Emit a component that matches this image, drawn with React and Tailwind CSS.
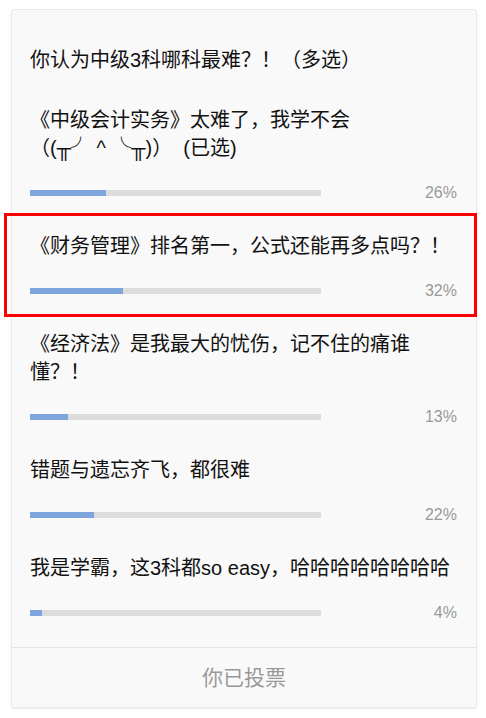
import React from "react";

const options = [
  {
    text: (
      <>
        《中级会计实务》太难了，我学不会
        <br />
        （(╥╯ ^ ╰╥)）&nbsp;&nbsp;(已选)
      </>
    ),
    pct: 26,
  },
  { text: "《财务管理》排名第一，公式还能再多点吗？！", pct: 32, marked: true },
  { text: "《经济法》是我最大的忧伤，记不住的痛谁懂？！", pct: 13 },
  { text: "错题与遗忘齐飞，都很难", pct: 22 },
  { text: "我是学霸，这3科都so easy，哈哈哈哈哈哈哈哈", pct: 4 },
];

function Option({ text, pct, marked }) {
  return (
    <div className="relative">
      {marked && (
        <div className="pointer-events-none absolute -top-[19px] -bottom-[16px] -left-[26px] -right-[20px] border-[3px] border-[#ff0000]" />
      )}
      <div className="text-[20px] leading-[28px] text-[#111111]">{text}</div>
      <div className="mt-[21px] flex h-[20px] items-center">
        <div className="h-[6px] w-[291px] bg-[#dcdcdc]">
          <div className="h-full bg-[#7ea6dc]" style={{ width: `${pct}%` }} />
        </div>
        <div className="flex-1 text-right text-[16px] leading-[20px] text-[#999999]">
          {pct}%
        </div>
      </div>
    </div>
  );
}

export default function App() {
  return (
    <div
      className="min-h-[718px] bg-white pt-[9px]"
      style={{ fontFamily: '"Liberation Sans", "Noto Sans CJK SC", sans-serif' }}
    >
      <div className="ml-[11px] w-[466px] rounded-[3px] border border-[#e9e9e9] bg-[#f9f9f9] shadow-[0_1px_2px_rgba(0,0,0,0.08)]">
        <div className="pl-[18px] pr-[19px] pt-[36px] pb-[24px]">
          <div className="text-[20px] leading-[28px] text-[#111111]">
            你认为中级3科哪科最难？！（多选）
          </div>
          <div className="mt-[32px] flex flex-col gap-[29px]">
            {options.map((o, i) => (
              <Option key={i} {...o} />
            ))}
          </div>
        </div>
        <div className="flex h-[60px] items-center justify-center border-t border-[#e3e3e3] text-[21px] text-[#999999]">
          你已投票
        </div>
      </div>
    </div>
  );
}
